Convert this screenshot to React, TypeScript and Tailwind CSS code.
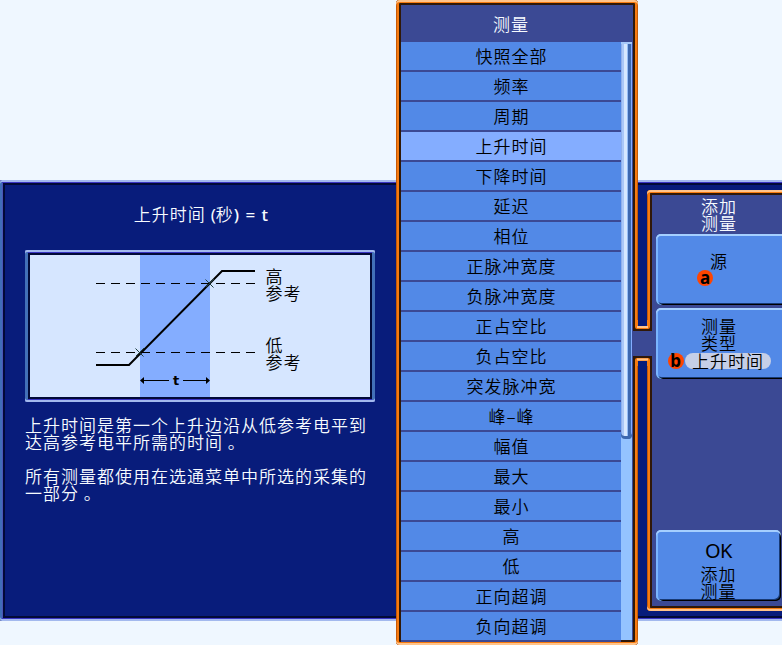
import React from "react";

const ITEMS = [
  "快照全部", "频率", "周期", "上升时间", "下降时间", "延迟", "相位", "正脉冲宽度", "负脉冲宽度", "正占空比",
  "负占空比", "突发脉冲宽", "峰–峰", "幅值", "最大", "最小", "高", "低", "正向超调", "负向超调",
];

const BLUE_FRAME =
  "shadow-[inset_0_2px_0_#a3b9ee,inset_0_-2px_0_#a3b9ee,inset_2px_0_0_#3f6db8,inset_0_3px_0_#3a35c4,inset_0_-3px_0_#3a35c4,inset_3px_0_0_#4a55b8,inset_0_0_0_5px_#020a38]";

function Diagram() {
  return (
    <div className="ml-[25px] h-[152px] w-[350px] rounded-[2px] bg-[#d6e6ff] p-[5px] shadow-[inset_0_2px_0_#a3b9ee,inset_0_-2px_0_#a3b9ee,inset_3px_0_0_#4270b8,inset_-3px_0_0_#4270b8,inset_0_0_0_3px_#3a35c4,inset_0_0_0_5px_#020a38]">
      <svg width="340" height="142" viewBox="30 255 340 142" className="block">
        <rect x="140" y="255" width="70" height="142" fill="#84adff" />
        <g stroke="#000" fill="none">
          <path d="M96 283.5H255M96 352.5H255" strokeDasharray="9 6" />
          <path d="M96 365H129L222 271H255" strokeWidth="2" />
          <path d="M205.500 279.500L213.500 287.500M135.500 348.500L143.500 356.500M206 287L214 279M136 356L144 348" stroke="#204040" />
          <path d="M143 380.500H169M183 380.500H207" />
        </g>
        <path d="M140 380.500L144 377V384ZM210 380.500L206 377V384Z" />
        <text x="176.500" y="385" textAnchor="middle" className="font-['DejaVu_Sans'] text-[13px] font-bold">t</text>
        <g className="font-['Noto_Sans_CJK_SC',sans-serif] text-[17px] tracking-[1px]">
          <text x="265.500" y="282.500">高</text>
          <text x="265.500" y="299.500">参考</text>
          <text x="265.500" y="352">低</text>
          <text x="265.500" y="369">参考</text>
        </g>
      </svg>
    </div>
  );
}

function Badge({ children }: { children: React.ReactNode }) {
  return (
    <span className="flex size-4 items-center justify-center rounded-full bg-[#ff4500] pb-px font-['Noto_Sans',sans-serif] text-[17px] leading-none font-bold tracking-normal">
      {children}
    </span>
  );
}

function SoftKey({ className, open, children }: { className: string; open?: boolean; children: React.ReactNode }) {
  return (
    <div
      className={
        "flex h-[71px] shrink-0 flex-col items-center bg-[#5289e7] " +
        (open
          ? "w-[126px] rounded-l-[5px] shadow-[inset_0_2px_0_#a5cfff,inset_2px_0_0_#7ab5ff,inset_0_-1px_0_#000,inset_0_-2px_0_#183a75] "
          : "w-[125px] rounded-[5px] shadow-[inset_0_2px_0_#a5cfff,inset_2px_0_0_#7ab5ff,inset_-1px_-1px_0_#000,inset_-2px_-2px_0_#183a75] ") +
        className
      }
    >
      {children}
    </div>
  );
}

export default function App() {
  return (
    <div className="relative flex h-[645px] w-[782px] items-start overflow-hidden bg-[#eff7ff] font-['Noto_Sans_CJK_SC',sans-serif] text-[17px] leading-[17px] font-[350] tracking-[1px] text-black">
      <section className="mt-[180px] h-[441px] w-[396px] overflow-hidden rounded-l-[2px] bg-[#081c7b] text-[#f7fbff]">
        <div className={"h-full w-[402px] rounded-l-[2px] " + BLUE_FRAME}>
          <h1 className="h-[70px] w-[402px] pt-[25px] text-center">
            上升时间 <span className="font-['Noto_Sans'] font-normal tracking-normal">(</span>秒
            <span className="font-['Noto_Sans'] font-medium tracking-normal [word-spacing:2px]">) = t</span>
          </h1>
          <Diagram />
          <p className="mt-[14px] ml-[25px] whitespace-nowrap">
            上升时间是第一个上升边沿从低参考电平到
            <br />
            达高参考电平所需的时间 。
          </p>
          <p className="mt-[17px] ml-[25px] whitespace-nowrap">
            所有测量都使用在选通菜单中所选的采集的
            <br />
            一部分 。
          </p>
        </div>
      </section>

      <section className="flex h-[645px] w-[242px] flex-col rounded-[4px] bg-[#3b4994] p-[5px] shadow-[inset_0_2px_0_#ffc38a,inset_0_-2px_0_#ffc38a,inset_1px_0_0_#c65a08,inset_-1px_0_0_#c65a08,inset_0_0_0_3px_#f77b10,inset_0_0_0_5px_#301808]">
        <h2 className="flex h-[37px] w-[220px] items-center justify-center pb-px text-[#f7fbff]">测量</h2>
        <div className="flex h-[598px]">
          <ul className="w-[220px]">
            {ITEMS.map((item, i) => (
              <li
                key={item}
                className={
                  "flex h-[30px] items-center justify-center border-b-2 border-[#3b4994] pb-[2px] pl-px " +
                  (i === 3 ? "bg-[#84adff]" : "bg-[#5289e7]")
                }
              >
                {item}
              </li>
            ))}
          </ul>
          <div className="w-[11px] bg-[#94c3ff]">
            <div className="h-[397px] rounded-b-[4px] bg-[linear-gradient(90deg,#8fb0ec_0_1px,#a9c7f8_1px_3px,#d6e8ff_3px_6px,#94bdf7_6px_7px,#3c68b0_7px_10px,#84adff_10px)] shadow-[inset_0_2px_0_#a5c8fa,inset_0_-3px_0_#3c68b0]" />
          </div>
        </div>
      </section>

      <section className="mt-[180px] h-[441px] w-[144px] bg-[#081c7b] pt-[10px] pl-[9px] shadow-[inset_0_2px_0_#a3b9ee,inset_0_-2px_0_#a3b9ee,inset_0_3px_0_#3a35c4,inset_0_-3px_0_#3a35c4,inset_0_5px_0_#020a38,inset_0_-5px_0_#020a38]">
        <div className="flex h-[421px] w-[135px] flex-col rounded-l-[4px] bg-[#3b4994] pl-[9px] shadow-[inset_0_2px_0_#ffc38a,inset_0_-2px_0_#ffc38a,inset_1px_0_0_#c65a08,inset_0_3px_0_#f77b10,inset_0_-3px_0_#f77b10,inset_3px_0_0_#f77b10,inset_0_5px_0_#301808,inset_0_-5px_0_#301808,inset_5px_0_0_#301808]">
          <h2 className="h-[44px] pt-[7px] text-center text-[#f7fbff]">
            添加
            <br />
            测量
          </h2>
          <SoftKey open className="pt-[18px]">
            <span>源</span>
            <div className="mt-px mr-[28px]">
              <Badge>a</Badge>
            </div>
          </SoftKey>
          <SoftKey open className="mt-[3px] pt-[9px]">
            <span>测量</span>
            <span>类型</span>
            <div className="mt-[2px] flex gap-px">
              <Badge>b</Badge>
              <span className="h-4 w-[86px] rounded-full bg-[#c6cfe7] pl-px text-center leading-[15px]">上升时间</span>
            </div>
          </SoftKey>
          <SoftKey className="mt-[151px] pt-[12px]">
            <span className="font-['Noto_Sans'] text-[20px] leading-[18px] font-normal tracking-[-0.5px]">OK</span>
            <span className="mt-[5px]">添加</span>
            <span>测量</span>
          </SoftKey>
        </div>
      </section>

      <svg className="absolute top-[320px] left-[632px]" width="20" height="46" viewBox="632 320 20 46">
        <path d="M633 326V330Q633 331 635 331H650Q652 331 652 329V326M633 361V358Q633 356 635 356H650Q652 356 652 358V361" fill="#301808" />
        <rect x="632" y="331" width="20" height="25" fill="#3b4994" />
        <path d="M635 320H650V327Q650 329 648 329H637Q635 329 635 327ZM635 366V360Q635 358 637 358H648Q650 358 650 360V366Z" fill="#f77b10" />
        <path d="M638 320H647V326H638ZM638 361H647V366H638Z" fill="#081c7b" />
        <path d="M637 327H648M637 359.500H648" stroke="#ffc38a" strokeWidth="2" />
      </svg>
    </div>
  );
}
